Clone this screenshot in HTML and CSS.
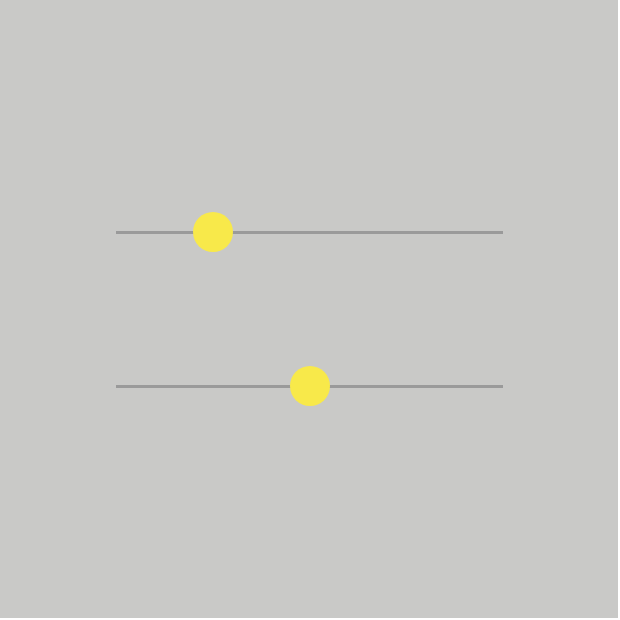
FILE: index.html
```html
<!DOCTYPE html>
<html lang="en">
<head>
  <meta charset="UTF-8" />
  <title>Sliders</title>
  <link rel="stylesheet" href="styles.css">
</head>
<body>

<!-- two plain sliders -->
<div class="stage">
  <div class="slider">
    <div class="track"></div>
    <div class="thumb" style="left: 25%;"></div>
  </div>
  <div class="slider">
    <div class="track"></div>
    <div class="thumb" style="left: 50%;"></div>
  </div>
</div>

</body>
</html>
```

FILE: styles.css
```css
html { background:#fff; }
body { margin:0; }

.stage {
  width:618px;
  height:618px;
  box-sizing:border-box;
  background:#c9c9c7;
  padding:212px 116px 0;
  display:flex;
  flex-direction:column;
  gap:114px;
}

.slider { position:relative; width:387px; height:40px; display:flex; align-items:center; }
.track { width:100%; height:3px; background:#9a9a9a; }
.thumb {
  position:absolute;
  top:0;
  width:40px;
  height:40px;
  margin-left:-20px;
  border-radius:50%;
  background:#f8e94a;
}
```
